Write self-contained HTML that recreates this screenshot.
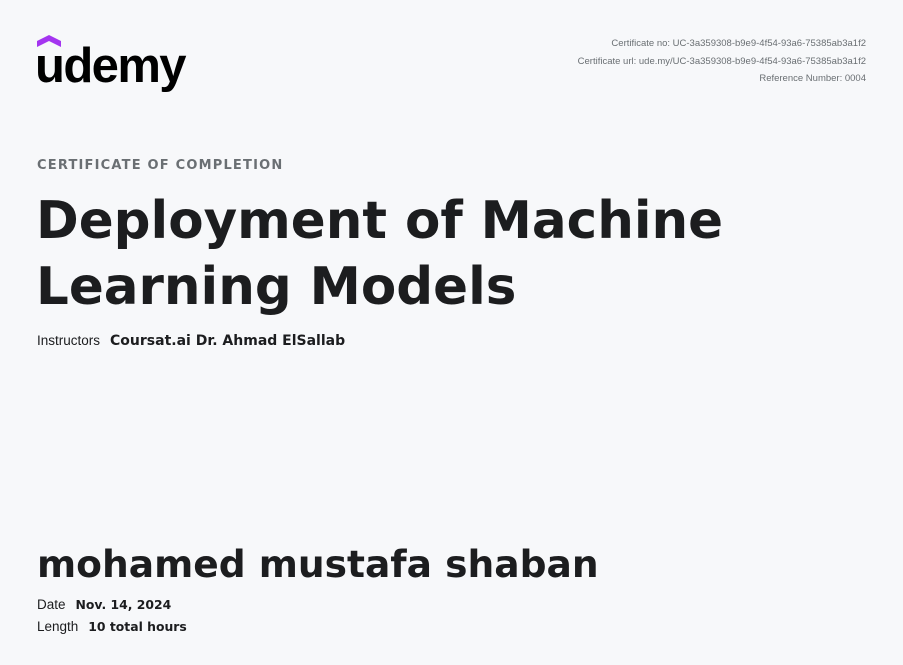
<!DOCTYPE html>
<html><head><style>
body{margin:0;width:903px;height:665px;background:#f7f8fa;position:relative;overflow:hidden;font-family:"Liberation Sans",sans-serif;color:#1c1d1f}
.a{position:absolute;white-space:nowrap}
.r{right:37px;text-align:right;font-size:9.5px;color:#6a6f73}
.d{font-family:"DejaVu Sans",sans-serif;font-weight:bold}
</style></head><body>
<svg class="a" style="left:37px;top:35px" width="24" height="12" viewBox="0 0 24 12"><path d="M0 12V6L12 0L24 6V12L12 6Z" fill="#a435f0"/></svg>
<div class="a" style="left:35px;top:38px;font-size:49px;font-weight:bold;letter-spacing:-1.6px;color:#000">udemy</div>
<div class="a r" style="top:38px">Certificate no: UC-3a359308-b9e9-4f54-93a6-75385ab3a1f2</div>
<div class="a r" style="top:56px">Certificate url: ude.my/UC-3a359308-b9e9-4f54-93a6-75385ab3a1f2</div>
<div class="a r" style="top:73px">Reference Number: 0004</div>
<div class="a d" style="left:37px;top:158px;font-size:13px;letter-spacing:1.2px;color:#6a6f73">CERTIFICATE OF COMPLETION</div>
<div class="a d" style="left:36px;top:188px;font-size:51.5px;line-height:66px">Deployment of Machine<br>Learning Models</div>
<div class="a" style="left:37px;top:333px;font-size:13.5px">Instructors<b class="d" style="font-size:14px;margin-left:10px">Coursat.ai Dr. Ahmad ElSallab</b></div>
<div class="a d" style="left:37px;top:542px;font-size:37.6px">mohamed mustafa shaban</div>
<div class="a" style="left:37px;top:597px;font-size:13.5px">Date<b class="d" style="font-size:12.4px;margin-left:10px">Nov. 14, 2024</b></div>
<div class="a" style="left:37px;top:619px;font-size:13.5px">Length<b class="d" style="font-size:12.4px;margin-left:10px">10 total hours</b></div>
</body></html>
